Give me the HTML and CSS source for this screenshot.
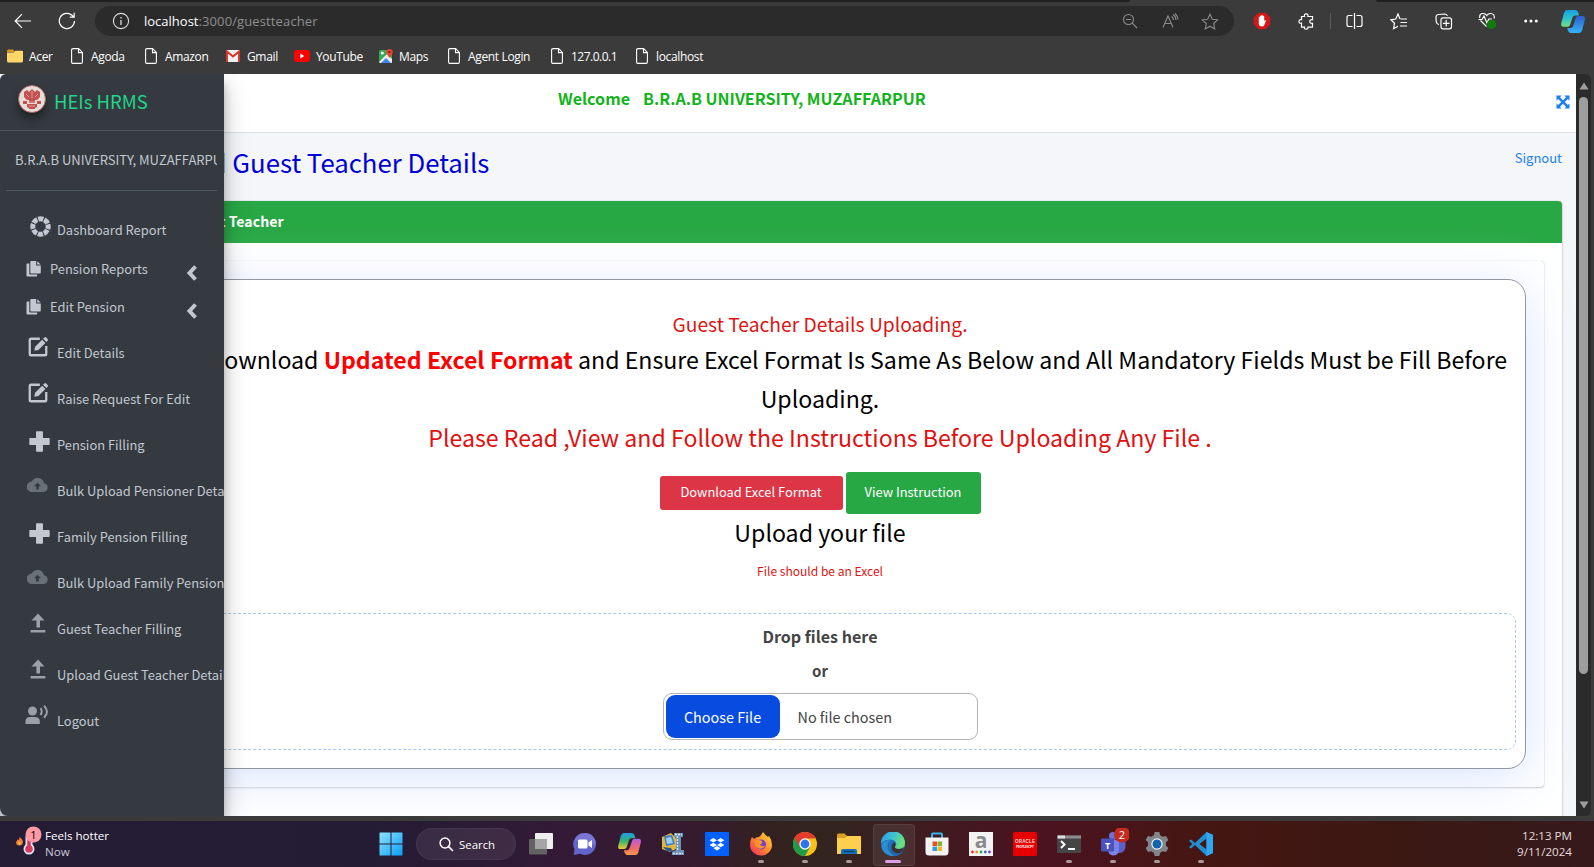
FILE: index.html
```html
<!DOCTYPE html>
<html lang="en">
<head>
<meta charset="utf-8">
<title>HEIs HRMS</title>
<link rel="stylesheet" href="styles.css">
</head>
<body>
<svg class="defs" aria-hidden="true">
  <defs>
    <symbol id="page" viewBox="0 0 12 16"><path d="M.6 2Q.6.6 2 .6h5.600L11.400 4.400V14q0 1.400-1.400 1.400H2Q.6 15.400.6 14z M7.500.8v3.800h3.800" fill="none" stroke="#fff" stroke-width="1.100"/></symbol>
    <symbol id="copy" viewBox="0 0 16 16"><path fill="#c2c7d0" d="M5.200 0h5v4.400h4.600v7.200q0 .9-.9.900H5.200q-.9 0-.9-.9V.9q0-.9.9-.9zM11.200.2l3.500 3.300h-3.500zM3.300 2.500v10.100q0 1 1 1h6.900v1q0 .9-.9.900H1.400q-.9 0-.9-.9V3.400q0-.9.900-.9z"/></symbol>
    <symbol id="edit" viewBox="0 0 24 24"><path d="M14 3H4.500Q3 3 3 4.500v15Q3 21 4.500 21h15q1.500 0 1.500-1.500V11" fill="none" stroke="#c2c7d0" stroke-width="2.500"/><path fill="#c2c7d0" d="M8 16l.8-4.400L16.500 4l3.600 3.500-7.700 7.700zM17.500 3l1.400-1.400q1-1 2 0l1.600 1.600q1 1 0 2L21.100 6.500z"/></symbol>
    <symbol id="plus" viewBox="0 0 20 20"><path fill="#c2c7d0" d="M7.300.3h5.400q.6 0 .6.700v5.700H19q.7 0 .7.600v5.400q0 .6-.7.600h-5.700V19q0 .7-.6.700H7.300q-.6 0-.6-.7v-5.700H1q-.7 0-.7-.6V7.300q0-.6.700-.6h5.700V1q0-.7.600-.7z"/></symbol>
    <symbol id="cloud" viewBox="0 0 24 18"><path fill="#6a7078" fill-rule="evenodd" d="M19.400 7.100A7.500 7.500 0 0 0 5.400 5 6 6 0 0 0 6 17h13a5 5 0 0 0 .4-9.900zM13.500 10.500V14h-3v-3.500H8L12 6.500l4 4z"/></symbol>
    <symbol id="up" viewBox="0 0 16 20"><path fill="#9a9fa8" d="M8 .5l6.500 7H10v7H6.400v-7H1.500zM.6 17h14.800v2.400H.6z"/></symbol>
    <symbol id="chev" viewBox="0 0 12 18"><path d="M9.500 2.500L3.500 9l6 6.500" fill="none" stroke="#c2c7d0" stroke-width="4"/></symbol>
  </defs>
</svg>

<header class="chrome">
  <div class="tabstrip"><i class="tab-a"></i><i class="tab-b"></i></div>
  <div class="toolbar">
    <svg class="back" width="18" height="16" viewBox="0 0 18 16"><path d="M17 8H1.500M8 1.200L1.200 8 8 14.800" fill="none" stroke="#fff" stroke-width="1.200"/></svg>
    <svg class="reload" width="18" height="18" viewBox="0 0 18 18"><path d="M16.500 9A7.600 7.600 0 1 1 14 3.300L16 5M16.200.8V5.200H11.800" fill="none" stroke="#fff" stroke-width="1.200"/></svg>
    <div class="url">
      <svg width="18" height="18" viewBox="0 0 18 18"><circle cx="9" cy="9" r="7.600" fill="none" stroke="#ddd" stroke-width="1.100"/><path d="M9 8v5M9 5v1.400" stroke="#ddd" stroke-width="1.300"/></svg>
      <span class="addr"><b>localhost</b><span class="path">:3000/guestteacher</span></span>
      <svg class="u1" width="16" height="16" viewBox="0 0 16 16"><path d="M11.500 6.500a5 5 0 1 1-10 0 5 5 0 0 1 10 0zM10.300 10.200L15 15M4 6.500h5" fill="none" stroke="#8c8c8c" stroke-width="1.100"/></svg>
      <svg class="u2" width="17" height="16" viewBox="0 0 17 16"><path d="M1 14.500L6 3l5 11.500M2.700 10.500h6.600M9.500 3.500q2 1.500 2 3.500M11 1.500q3 2 3 5.500M13 .5q3 3 3 6" fill="none" stroke="#8c8c8c" stroke-width="1.100"/></svg>
      <svg class="u3" width="18" height="17" viewBox="0 0 18 17"><path d="M9 1.200l2.300 5 5.300.6-3.900 3.700 1 5.400L9 13.200l-4.700 2.700 1-5.400L1.400 6.800l5.300-.6z" fill="none" stroke="#8c8c8c" stroke-width="1.100"/></svg>
    </div>
    <div class="tools">
      <svg class="t1" width="18" height="18" viewBox="0 0 18 18"><path d="M5.500.8h7l4.700 4.700v7l-4.700 4.700h-7L.8 12.500v-7z" fill="#d41717"/><path d="M5.800 9V5q.7-.7 1.200 0v-1q.8-.8 1.400 0v-.7q.8-.7 1.400 0V4q.8-.6 1.400.2V9l1-1q1 0 .6 1l-1.600 4.200Q10.600 14.500 9 14.500q-3.200 0-3.200-3z" fill="#fff"/></svg>
      <svg class="t2" width="17" height="17" viewBox="0 0 17 17"><path d="M3.500 3.500h3q-.6-2.700 1.700-2.700T9.900 3.500h4.600v3.200q-2.700-.4-2.700 1.800t2.700 1.800v3.900H10q.5 2-1.800 2t-1.700-2h-3v-4q-2.500.4-2.500-1.800t2.500-1.700z" fill="none" stroke="#fff" stroke-width="1.200"/></svg>
      <i class="sep"></i>
      <svg class="t3" width="17" height="16" viewBox="0 0 17 16"><path d="M6.500 2.500H3Q1 2.500 1 4.500v7q0 2 2 2h3.500M10.500 2.500H14q2 0 2 2v7q0 2-2 2h-3.500M8.500 0v16" fill="none" stroke="#fff" stroke-width="1.200"/></svg>
      <svg class="t4" width="18" height="17" viewBox="0 0 18 17"><path d="M10 6L8 1 5.800 6 .9 6.800 4.500 10.300 3.600 15.700 8 13.200M10.500 6H17M10.500 9.500H17M10 13h7" fill="none" stroke="#fff" stroke-width="1.200"/></svg>
      <svg class="t5" width="18" height="17" viewBox="0 0 18 17"><path d="M4 11.500Q1.500 11 1.200 8.500L1 4Q1 2 3 1.500L10 1q2 0 2.300 2M8 4.800h6.500q2 0 2 2v7q0 2-2 2H8q-2 0-2-2v-7q0-2 2-2zM11.200 7v6.500M8 10.300h6.500" fill="none" stroke="#fff" stroke-width="1.200"/></svg>
      <svg class="t6" width="20" height="18" viewBox="0 0 20 18"><path d="M8.500 14.500L2.500 8.500M1.700 6Q1.200 1.500 5 1.500 7.500 1.500 8.800 3.500 10 1.500 12.700 1.500q4 0 3.600 5M.5 7.500H4L6 4l3 7 1.800-4H14" fill="none" stroke="#fff" stroke-width="1.200"/><circle cx="13.500" cy="12.500" r="4.700" fill="#107c10"/></svg>
      <svg class="t7" width="14" height="4" viewBox="0 0 14 4"><circle cx="1.700" cy="2" r="1.500" fill="#fff"/><circle cx="7" cy="2" r="1.500" fill="#fff"/><circle cx="12.300" cy="2" r="1.500" fill="#fff"/></svg>
      <svg class="t8" width="26" height="25" viewBox="0 0 26 25"><defs><linearGradient id="ca" x2="0" y2="1"><stop stop-color="#14a0e0"/><stop offset=".5" stop-color="#2bc4cf"/><stop offset="1" stop-color="#7be07d"/></linearGradient><linearGradient id="cb" x2="0" y2="1"><stop stop-color="#2f5fd0"/><stop offset="1" stop-color="#33b5f7"/></linearGradient></defs><path d="M7 1h8.500q2 0 3 3l.5 2.500h-4q-2 0-2.700 2.500L10 16q-.5 1.800-2.500 1.800H3.500Q.5 17.800 1.300 14L4 4q1-3 3-3z" fill="url(#ca)"/><path d="M18.500 7h4q3 0 2.400 3.500L22.500 20q-1 4-3.500 4h-8q-3 0-3.800-5h3.300q2 0 2.800-2.500L15.700 9q.6-2 2.800-2z" fill="url(#cb)"/></svg>
    </div>
  </div>
  <nav class="bookmarks">
    <a class="b0"><svg width="16" height="14" viewBox="0 0 16 14"><path d="M0 2Q0 .5 1.500.5H6L8 3H0z" fill="#d99b1b"/><path d="M0 3.500h6.500L8.500 1.700H15q1 0 1 1V12q0 1.500-1.500 1.500h-13Q0 13.500 0 12z" fill="#ffd869"/></svg><span>Acer</span></a>
    <a class="b1"><svg width="12" height="16"><use href="#page"/></svg><span>Agoda</span></a>
    <a class="b2"><svg width="12" height="16"><use href="#page"/></svg><span>Amazon</span></a>
    <a class="b3"><svg width="14" height="12" viewBox="0 0 14 12"><path d="M0 1q0-1 1-1h12q1 0 1 1v10q0 1-1 1H1q-1 0-1-1z" fill="#f2f2f2"/><path d="M1 12V1.500L7 6.500l6-5V12" fill="none" stroke="#d93025" stroke-width="1.900"/></svg><span>Gmail</span></a>
    <a class="b4"><svg width="16" height="12" viewBox="0 0 16 12"><rect width="16" height="12" rx="3" fill="#f00"/><path d="M6.300 3.500v5l4-2.500z" fill="#fff"/></svg><span>YouTube</span></a>
    <a class="b5"><svg width="14" height="14" viewBox="0 0 14 14"><rect y="1" width="13" height="13" rx="1.500" fill="#34a853"/><path d="M0 13L8 5l5 5v3.500L12.500 14H1z" fill="#eee"/><path d="M2 14l5-5 5 5z" fill="#4285f4"/><path d="M10.500 0q3.300 0 3.300 3 0 1.500-3.300 6Q7.300 4.500 7.300 3q0-3 3.200-3z" fill="#ea4335"/><circle cx="10.500" cy="3" r="1.100" fill="#7c1710"/><circle cx="3.300" cy="4" r="1.500" fill="#fff"/></svg><span>Maps</span></a>
    <a class="b6"><svg width="12" height="16"><use href="#page"/></svg><span>Agent Login</span></a>
    <a class="b7"><svg width="12" height="16"><use href="#page"/></svg><span class="ip">127.0.0.1</span></a>
    <a class="b8"><svg width="12" height="16"><use href="#page"/></svg><span>localhost</span></a>
  </nav>
</header>

<div class="view">
  <aside class="sidebar">
    <div class="brand">
      <svg class="seal" width="28" height="28" viewBox="0 0 28 28"><circle cx="14" cy="14" r="13.500" fill="#e6dcdb" stroke="#b5645f"/><path d="M6 7l3-2 2 2 3-3 3 3 2-2 3 2v5l-3 3H9l-3-3zM11 14h6v4h-6zM5 16h4v3H5zM19 16h4v3h-4zM9 19h10v3l-2 1v1h-6v-1l-2-1z" fill="#c4514d"/><path d="M8 9l3 3M14 6v7M20 9l-3 3M10 17h8M11 21h6" stroke="#e8c9c6" stroke-width=".7"/></svg>
      <span>HEIs HRMS</span>
    </div>
    <div class="univ"><span>B.R.A.B UNIVERSITY, MUZAFFARPUR</span></div>
    <ul class="menu">
      <li class="first"><svg class="m-ring" width="21" height="21" viewBox="0 0 21 21"><circle cx="10.500" cy="10.500" r="7.700" fill="none" stroke="#c2c7d0" stroke-width="5" stroke-dasharray="5.050 1" stroke-dashoffset="2.500"/></svg><span>Dashboard Report</span></li>
      <li class="tree"><svg width="16" height="16"><use href="#copy"/></svg><span>Pension Reports</span><svg class="arrow" width="12" height="18"><use href="#chev"/></svg></li>
      <li class="tree last"><svg width="16" height="16"><use href="#copy"/></svg><span>Edit Pension</span><svg class="arrow" width="12" height="18"><use href="#chev"/></svg></li>
      <li><svg class="m-edit" width="22" height="22"><use href="#edit"/></svg><span>Edit Details</span></li>
      <li><svg class="m-edit" width="22" height="22"><use href="#edit"/></svg><span>Raise Request For Edit</span></li>
      <li><svg class="m-plus" width="21" height="21"><use href="#plus"/></svg><span>Pension Filling</span></li>
      <li><svg class="m-cloud" width="21" height="16"><use href="#cloud"/></svg><span>Bulk Upload Pensioner Details</span></li>
      <li><svg class="m-plus" width="21" height="21"><use href="#plus"/></svg><span>Family Pension Filling</span></li>
      <li><svg class="m-cloud" width="21" height="16"><use href="#cloud"/></svg><span>Bulk Upload Family Pension</span></li>
      <li><svg class="m-up" width="16" height="20"><use href="#up"/></svg><span>Guest Teacher Filling</span></li>
      <li><svg class="m-up" width="16" height="20"><use href="#up"/></svg><span>Upload Guest Teacher Details</span></li>
      <li><svg class="m-voice" width="24" height="20" viewBox="0 0 24 20"><circle cx="7.500" cy="6" r="4.500" fill="#9a9fa8"/><path d="M.5 19v-2.500Q.5 12 5 12h5q4.800 0 4.800 4.500V19z" fill="#9a9fa8"/><path d="M15.500 3q2.500 3.300 0 7M19 .8q6 6 0 12" fill="none" stroke="#9a9fa8" stroke-width="2"/></svg><span>Logout</span></li>
    </ul>
  </aside>

  <main class="main">
    <div class="navbar">
      <strong class="welcome"><span>Welcome</span><span>B.R.A.B UNIVERSITY, MUZAFFARPUR</span></strong>
      <svg width="14" height="14" viewBox="0 0 14 14"><path fill="#1a7ff5" d="M.5.500h5L4 2.200l3 3 3-3L8.500.500h5v5L11.800 4l-3 3 3 3 1.700-1.500v5h-5L10 11.800l-3-3-3 3 1.500 1.700h-5v-5L2.200 10l3-3-3-3L.5 5.500z"/></svg>
    </div>
    <div class="titlebar">
      <h1>Upload Guest Teacher Details</h1>
      <a>Signout</a>
    </div>
    <section class="card">
      <div class="card-head">Upload Guest Teacher</div>
      <div class="card-body">
        <div class="inner">
          <form class="upload">
            <p class="lead">Guest Teacher Details Uploading.</p>
            <p class="big">Please Download <b>Updated Excel Format</b> and Ensure Excel Format Is Same As Below and All Mandatory Fields Must be Fill Before Uploading.</p>
            <p class="big red">Please Read ,View and Follow the Instructions Before Uploading Any File .</p>
            <div class="buttons">
              <span class="btn danger">Download Excel Format</span>
              <span class="btn success">View Instruction</span>
            </div>
            <p class="big file">Upload your file</p>
            <p class="note">File should be an Excel</p>
            <div class="drop">
              <b class="drop-title">Drop files here</b>
              <b class="drop-or">or</b>
              <div class="picker"><span class="pick">Choose File</span><span class="none">No file chosen</span></div>
            </div>
          </form>
        </div>
      </div>
    </section>
  </main>
  <div class="scroll">
    <svg width="10" height="8" viewBox="0 0 10 8"><path d="M5 .5l4.600 7H.4z" fill="#9e9e9e"/></svg>
    <i class="thumb"></i>
    <svg class="dn" width="10" height="8" viewBox="0 0 10 8"><path d="M5 7.500L9.600.5H.4z" fill="#9e9e9e"/></svg>
  </div>
</div>

<footer class="taskbar">
  <div class="weather">
    <svg width="28" height="30" viewBox="0 0 28 30"><path d="M3.500 11q3 2 3.500 4.500 0 4-3.500 4T0 16q1-1 1.500-2.500L3 14z" fill="#f47b3a"/><path d="M2 17l1.500-2L5 17.500 3.500 19z" fill="#ffc845"/><circle cx="13" cy="23" r="5.500" fill="#dfe8fb"/><rect x="9.500" y="8" width="7" height="16" rx="3" fill="#dfe8fb"/><circle cx="13" cy="23" r="3.800" fill="#d83b5c"/><rect x="11.200" y="12" width="3.600" height="11" fill="#d83b5c"/><circle cx="17.500" cy="8.500" r="8" fill="#ff99a4"/><text x="17.500" y="12.500" class="badge-one">1</text></svg>
    <div><span>Feels hotter</span><span class="now">Now</span></div>
  </div>
  <div class="apps">
    <i class="app"><svg width="24" height="24" viewBox="0 0 24 24"><defs><linearGradient id="w" x2="1" y2="1"><stop stop-color="#8fe3ff"/><stop offset="1" stop-color="#0a9df5"/></linearGradient></defs><path fill="url(#w)" d="M1 .5h10.500V11.500H.5V1zM12.500.5H23q.5 0 .5.500v10.500h-11zM.5 12.500h11v11H1q-.5 0-.5-.5zM12.500 12.500h11V23q0 .5-.5.500H12.500z"/></svg></i>
    <div class="search"><svg width="15" height="15" viewBox="0 0 15 15"><circle cx="6" cy="6" r="4.900" fill="none" stroke="#fff" stroke-width="1.500"/><path d="M9.600 9.600L14 14" stroke="#fff" stroke-width="1.700"/></svg><span>Search</span></div>
    <i class="app"><svg width="24" height="24" viewBox="0 0 24 24"><rect x="6" y="1" width="18" height="16" rx="1" fill="#eee"/><rect y="7" width="18" height="15.500" rx="1" fill="#636363"/><path d="M6 7h12v10H6z" fill="#a5a5a5"/></svg></i>
    <i class="app"><svg width="24" height="24" viewBox="0 0 24 24"><path d="M12 1a11 11 0 1 1-5 20.800L.8 23l.7-6A11 11 0 0 1 12 1z" fill="#6264c9"/><path d="M12 1a11 11 0 0 1 11 11L12 14 2 8q3-7 10-7z" fill="#8b80d8" opacity=".6"/><rect x="5" y="7.500" width="9.500" height="9" rx="1.500" fill="#fff"/><path d="M15.500 10.500L19 8v8l-3.500-2.500z" fill="#fff"/></svg></i>
    <i class="app"><svg width="25" height="24" viewBox="0 0 26 25"><defs><linearGradient id="p" x2="0" y2="1"><stop stop-color="#1e9be8"/><stop offset=".5" stop-color="#35b36b"/><stop offset="1" stop-color="#f3c934"/></linearGradient><linearGradient id="q" x2="0" y2="1"><stop stop-color="#b35be0"/><stop offset=".6" stop-color="#f06a6a"/><stop offset="1" stop-color="#fb9a4b"/></linearGradient></defs><path d="M7 1h8.500q2 0 3 3l.5 2.500h-4q-2 0-2.700 2.500L10 16q-.5 1.800-2.500 1.800H3.500Q.5 17.800 1.300 14L4 4q1-3 3-3z" fill="url(#p)"/><path d="M18.500 7h4q3 0 2.400 3.500L22.500 20q-1 4-3.500 4h-8q-3 0-3.800-5h3.300q2 0 2.800-2.500L15.700 9q.6-2 2.800-2z" fill="url(#q)"/></svg></i>
    <i class="app"><svg width="24" height="24" viewBox="0 0 24 24"><path d="M1 5l9-4 5 5v11l-6 3-8-3z" fill="#e0b83a"/><path d="M3 4l8-1 3 9-9 2z" fill="#3c7bd0"/><path d="M5 6l5-1 2 6-6 1z" fill="#9fd0f5"/><path d="M13 1h9v4h-2v13h3v5H11v-3l4-2V5h-2z" fill="#6b93b8"/><path d="M16.500 4v15M12 21.500h10M14 2.500h7" stroke="#dbe9f5" stroke-width="1.300" stroke-dasharray="2 1"/><path d="M2 15l8 1 2 4-6-1z" fill="#28588e"/></svg></i>
    <i class="app"><svg width="24" height="24" viewBox="0 0 24 24"><path fill="#0061fe" d="M0 0h24v24H0z"/><path fill="#fff" d="M8.300 6L12 8.300 8.300 10.600 4.600 8.300zM15.700 6l3.700 2.300-3.700 2.300L12 8.300zM8.300 10.700L12 13l-3.700 2.300L4.600 13zM15.700 10.700l3.700 2.300-3.700 2.300L12 13zM12 14l3.600 2.200L12 18.500l-3.600-2.300z"/></svg></i>
    <i class="app run"><svg width="24" height="24" viewBox="0 0 24 24"><defs><linearGradient id="f" x1="1" x2="0" y2="1"><stop stop-color="#ffe33d"/><stop offset=".5" stop-color="#ff8a2a"/><stop offset="1" stop-color="#f0246b"/></linearGradient></defs><path d="M3 5l2 2q2-2 5-2 2-1 4-5 2 3 5 5l1-1q3 4 3 9a11 10.500 0 0 1-22 0q0-5 2-8z" fill="url(#f)"/><circle cx="12" cy="12.500" r="5" fill="#7541c9"/><path d="M6 9q4-2 7 0 1 3-2 3.500 1 2.500 5 1-2 4-6 3-5-2-4-7.500z" fill="#ff9428"/></svg></i>
    <i class="app run"><svg width="24" height="24" viewBox="0 0 24 24"><circle cx="12" cy="12" r="12" fill="#fbc116"/><path d="M12 12H6.800L1.600 6A12 12 0 0 0 12 24l5.200-9z" fill="#229a4b"/><path d="M12 6.500h10.600A12 12 0 0 0 1.600 6l5.200 9z" fill="#e33b2e"/><circle cx="12" cy="12" r="5.700" fill="#fff"/><circle cx="12" cy="12" r="4.400" fill="#2f74e8"/></svg></i>
    <i class="app run"><svg width="24" height="24" viewBox="0 0 24 24"><path d="M0 3q0-1.500 1.500-1.500h6L10 4H24v8H0z" fill="#dd9f1f"/><path d="M0 6h8l2-2h12.500Q24 4 24 5.500V22H0z" fill="#fecf4e"/><path d="M4 22v-3q0-2 2-2h12q2 0 2 2v3z" fill="#1670b8"/><path d="M7 19.500h10" stroke="#0b3f73" stroke-width="1.300"/></svg></i>
    <i class="app active"><svg width="24" height="24" viewBox="0 0 24 24"><defs><linearGradient id="e" x2="1" y2=".3"><stop stop-color="#1b90d8"/><stop offset=".5" stop-color="#2cb9d8"/><stop offset="1" stop-color="#5ddd6e"/></linearGradient></defs><circle cx="12" cy="12" r="12" fill="#0d66b5"/><path d="M0 11.500A12 12 0 0 1 24 11q0 6-6 6-4.500 0-4-2.500 1.300-1 1.300-3Q14.500 8 9.500 7.500 3.500 7.500 0 11.500z" fill="url(#e)"/><path d="M9.500 8q-6 5-1 12 2 2.500 5 4Q5 24 1.500 18-2 9.500 9.500 8z" fill="#1a86cf"/><path d="M14 14.500q-.5 2.500 4 2.500 3 0 5-2-1 4.500-5 7-6-1-7.500-5Q10 13 13 10q2.500 2 1 4.500z" fill="#2c1f22"/><path d="M10.500 13q-1 7 5 8.200 4 .3 7-2.700-3.500 5.500-9 5.500-7-3-3-11z" fill="#1458a0"/></svg></i>
    <i class="app"><svg width="24" height="24" viewBox="0 0 24 24"><path d="M7 7V2.500Q7 1.500 8 1.500h8q1 0 1 1V7" fill="none" stroke="#3bb4ee" stroke-width="2"/><path d="M.5 5.500h23V20q0 3.500-3.500 3.500H4Q.5 23.500.5 20z" fill="#f4f4f4"/><path d="M7.500 9.500H12V14H7.500z" fill="#e8502a"/><path d="M12.600 9.500H17V14h-4.400z" fill="#7fb62c"/><path d="M7.500 14.600H12V19H7.500z" fill="#2d9fe3"/><path d="M12.600 14.600H17V19h-4.400z" fill="#f5b81c"/></svg></i>
    <i class="app"><svg width="24" height="24" viewBox="0 0 24 24"><path fill="#f3f3f3" d="M0 0h24v24H0z"/><text x="12" y="16" class="glyph-a">a</text><circle cx="3.500" cy="20" r="1.400" fill="#e8392b"/><circle cx="7.700" cy="20" r="1.400" fill="#f08b1d"/><circle cx="12" cy="20" r="1.400" fill="#35a344"/><circle cx="16.300" cy="20" r="1.400" fill="#2d6ae0"/><circle cx="20.500" cy="20" r="1.400" fill="#8b3bd0"/></svg></i>
    <i class="app"><svg width="24" height="24" viewBox="0 0 24 24"><rect width="24" height="24" rx="1.500" fill="#e60000"/><text x="12" y="10.500" class="ora" textLength="20">ORACLE</text><text x="12" y="16" class="ora sm" textLength="18">PEOPLESOFT</text></svg></i>
    <i class="app run"><svg width="24" height="24" viewBox="0 0 24 24"><path fill="#454545" d="M0 3.500h24V20q0 1-1 1H1q-1 0-1-1z"/><path d="M0 3.500h24v3H0z" fill="#8c8c8c"/><path d="M1 3.500h7v3H1z" fill="#ddd"/><path d="M4 9l3.500 3.500L4 16M11 17h7" fill="none" stroke="#fff" stroke-width="2"/></svg></i>
    <i class="app run"><svg width="32" height="32" viewBox="0 0 32 32"><circle cx="16" cy="8" r="4" fill="#6b71d6"/><path d="M16 12h11q1.500 0 1.500 1.500V19a6 6 0 0 1-6 6H16z" fill="#5a60c8"/><path d="M11 12h11v9q0 6-5.500 6.500Q11 27 11 21z" fill="#7b83eb"/><rect x="4" y="10.500" width="13" height="13" rx="1" fill="#4a52bd"/><text x="10.500" y="20.500" class="teams">T</text><circle cx="25" cy="6.500" r="8" fill="#c42b1c"/><text x="25" y="10.800" class="two">2</text></svg></i>
    <i class="app run"><svg width="24" height="24" viewBox="0 0 24 24"><path d="M9.700 0h4.600l.9 3.300 2.600 1.500 3.200-.9 2.400 4-2.400 2.400v3.400l2.400 2.400-2.400 4-3.200-.9-2.600 1.500-.9 3.300H9.700l-.9-3.300-2.600-1.500-3.200.9-2.400-4L3 13.700v-3.400L.6 7.900l2.400-4 3.200.9 2.600-1.500z" fill="#80858a"/><circle cx="12" cy="12" r="5.700" fill="#f2f5f8"/><circle cx="12" cy="12" r="4.500" fill="#1464ad"/></svg></i>
    <i class="app run"><svg width="24" height="24" viewBox="0 0 24 24"><path d="M17.500 0L24 3v18l-6.500 3L6 13l-4 3.500-2-1.300L3.500 12 0 8.800l2-1.300L6 11zM17.500 6.500L10.500 12l7 5.500z" fill="#1f8fd8" fill-rule="evenodd"/><path d="M17.500 0L24 3v18l-6.500 3z" fill="#2ea8f0"/></svg></i>
  </div>
  <div class="clock"><span>12:13 PM</span><span>9/11/2024</span></div>
</footer>
</body>
</html>
```
FILE: styles.css
```css
* { box-sizing: border-box; }
body {
  margin: 0;
  width: 1594px;
  height: 867px;
  overflow: hidden;
  display: flex;
  flex-direction: column;
  background: #3b3b3b;
  font-family: "Noto Sans CJK SC", "Noto Sans", sans-serif;
}
svg { display: block; flex: none; }
p, h1, ul { margin: 0; padding: 0; }
.defs { position: absolute; width: 0; height: 0; }

/* browser frame */
.chrome { height: 74px; color: #fff; font-family: "Open Sans", "Noto Sans", sans-serif; }
.tabstrip { height: 2px; display: flex; justify-content: space-between; }
.tab-a { width: 1130px; background: #202020; border-radius: 0 0 4px 0; }
.tab-b { width: 218px; background: #202020; border-radius: 0 0 0 4px; }
.toolbar { height: 38px; display: flex; align-items: center; padding-left: 14px; }
.reload { margin-left: 26px; }
.url {
  margin-left: 19px; width: 1139px; height: 30px; border-radius: 15px;
  background: #2b2b2b; display: flex; align-items: center; padding: 0 15px 0 17px;
}
.addr { margin-left: 14px; font-size: 13px; color: #8f8f8f; flex: 1; line-height: 20px; }
.addr b { color: #fff; font-weight: 400; }
.path { letter-spacing: .12px; }
.u2 { margin-left: 24px; }
.u3 { margin-left: 22px; }
.tools { display: flex; align-items: center; }
.t1 { margin-left: 19px; }
.t2 { margin-left: 27px; }
.sep { width: 1px; height: 16px; background: #5c5c5c; margin-left: 15px; }
.t3 { margin-left: 15px; }
.t4 { margin-left: 27px; }
.t5 { margin-left: 27px; }
.t6 { margin-left: 25px; }
.t7 { margin-left: 26px; }
.t8 { margin-left: 22px; }
.bookmarks { height: 34px; display: flex; font-size: 12px; }
.bookmarks a { display: flex; align-items: center; height: 32px; white-space: nowrap; }
.bookmarks span { letter-spacing: -.35px; }
.bookmarks .ip { letter-spacing: -.5px; }
.b0 { width: 64px; margin-left: 7px; gap: 6px; }
.b1, .b2, .b6, .b7, .b8 { gap: 8px; }
.b1 { width: 74px; }
.b2 { width: 81px; }
.b3 { width: 68px; gap: 7px; }
.b4 { width: 85px; gap: 6px; }
.b5 { width: 69px; gap: 6px; }
.b6 { width: 103px; }
.b7 { width: 85px; }

/* page viewport */
.view { position: relative; height: 742px; display: flex; overflow: hidden; }
.main { width: 1576px; background: #f4f6f9; }
.sidebar {
  position: absolute; left: 0; top: 0; z-index: 2; width: 224px; height: 742px; overflow: hidden;
  background: #343a40; color: #c2c7d0; border-radius: 6px 0 0 8px;
  box-shadow: 0 12px 25px rgba(0,0,0,.25), 0 9px 9px rgba(0,0,0,.2);
}
.brand { height: 57px; border-bottom: 1px solid #4b545c; display: flex; align-items: center; padding: 0 0 6px 18px; gap: 8px; color: #20d48a; font-size: 18.500px; line-height: 30px; }
.brand span { padding-top: 4px; }
.seal { border-radius: 50%; box-shadow: 0 6px 8px rgba(0,0,0,.4); }
.univ { margin: 0 7px 0 6px; height: 60px; border-bottom: 1px solid #4f5962; padding: 19px 0 0 9px; overflow: hidden; white-space: nowrap; font-size: 13px; line-height: 20px; }
.menu { list-style: none; padding-top: 19px; }
.menu li { height: 46px; display: flex; align-items: center; padding-left: 26px; font-size: 12.900px; line-height: 20px; white-space: nowrap; }
.menu li span { margin-left: auto; width: 167px; flex: none; }
.menu .first { height: 40px; }
.menu .tree { height: 38px; }
.menu .tree span { width: auto; margin: 0 auto 0 8px; }
.menu .arrow { margin: 8px 26px 0 0; }
.menu .last { margin-bottom: 4px; }
.m-ring { margin: 0 0 8px 4px; }
.m-edit { margin: 0 0 12px 1px; }
.m-plus { margin: 0 0 8px 3px; }
.m-cloud { margin: 0 0 12px 1px; }
.m-up { margin: 0 0 13px 4px; }
.m-voice { margin: 0 0 13px -1px; }

.navbar { height: 59px; background: #fff; border-bottom: 1px solid #dee2e6; display: flex; align-items: center; padding: 0 6px 2px 558px; }
.welcome { flex: 1; display: flex; gap: 13px; color: #12b31b; font-size: 16.080px; line-height: 24px; padding-bottom: 8px; }
.titlebar { height: 68px; padding: 0 14px 0 139px; display: flex; justify-content: space-between; }
h1 { font-size: 25.750px; font-weight: 400; line-height: 58px; color: #0000d6; }
.titlebar a { color: #1a7ff0; font-size: 13px; line-height: 50px; }
.card { margin: 0 14px 0 78px; height: 620px; background: #fff; border-radius: 4px; box-shadow: 0 0 1px rgba(0,0,0,.3), 0 1px 3px rgba(0,0,0,.2); }
.card-head { height: 42px; background: #28a745; border-radius: 4px 4px 0 0; color: #fff; font-weight: 700; font-size: 14.150px; line-height: 41px; padding-left: 54px; }
.card-body { padding: 18px 18px; }
.inner { border-radius: 4px; padding: 18px; box-shadow: 0 0 1px rgba(0,0,0,.25), 0 1px 2px rgba(0,0,0,.2); }
.upload { height: 490px; background: #fff; border: 1px solid #9496a0; border-radius: 18px; box-shadow: 0 9px 54px rgb(218,229,255); padding: 27px 9px 0; text-align: center; color: #000; }
.lead { font-size: 19.250px; line-height: 34px; color: #dc1414; }
.big { font-size: 23.150px; line-height: 39px; position: relative; top: -1px; }
.big b { color: #f00; }
.red { color: #e01010; }
.buttons { margin-top: 14px; height: 42px; display: flex; gap: 3px; justify-content: center; align-items: center; color: #fff; font-size: 12.900px; line-height: 20px; }
.btn { border-radius: 3px; display: flex; align-items: center; justify-content: center; padding-bottom: 3px; }
.danger { width: 183px; height: 34px; background: #dc3545; }
.success { width: 135px; height: 42px; background: #28a745; }
.note { font-size: 12.050px; line-height: 36px; color: #dc1414; }
.drop { margin-top: 24px; height: 137px; border: 1px dashed #a9c6ea; border-radius: 9px; display: flex; flex-direction: column; align-items: center; padding-top: 7px; color: #444; }
.drop-title { font-size: 16.080px; line-height: 30px; }
.drop-or { font-size: 15px; line-height: 40px; }
.picker { margin-top: 2px; width: 315px; height: 47px; border: 1px solid #b5b5b5; border-radius: 9px; display: flex; align-items: center; padding-left: 2px; font-size: 14.400px; }
.pick { width: 114px; height: 43px; border-radius: 9px; background: #084cdf; color: #fff; display: flex; align-items: center; justify-content: center; padding-bottom: 1px; }
.none { margin-left: 18px; padding-bottom: 1px; }

.scroll { width: 15px; background: #2b2b2b; border-radius: 0 6px 6px 0; display: flex; flex-direction: column; align-items: center; padding-top: 8px; }
.thumb { width: 9px; height: 577px; margin-top: 7px; border-radius: 5px; background: #9e9e9e; }
.dn { margin-top: 127px; }

/* system taskbar */
.taskbar {
  margin-top: 5px; height: 46px; display: flex; color: #fff; font-family: "Open Sans", "Noto Sans", sans-serif;
  background: linear-gradient(90deg, #241d35 0, #231c34 360px, #331a36 560px, #361a30 680px, #33221f 780px, #34241f 840px, #431820 960px, #4b1320 1050px, #451612 1200px, #3c1813 1400px, #351a1c 100%);
}
.weather { width: 369px; display: flex; padding-left: 16px; gap: 1px; font-size: 11.600px; line-height: 16px; }
.weather div { display: flex; flex-direction: column; align-items: flex-start; padding-top: 7px; }
.weather svg { margin-top: 5px; }
.now { color: #cfc9d6; }
.apps { display: flex; align-items: center; }
.app { position: relative; width: 44px; height: 46px; display: flex; align-items: center; justify-content: center; font-style: normal; }
.run::after, .active::after { content: ""; position: absolute; bottom: 4px; left: 19px; width: 6px; height: 3px; border-radius: 2px; background: #a8989a; }
.active::after { left: 14px; width: 16px; background: #dda0e6; }
.active::before { content: ""; position: absolute; left: 2px; top: 3px; width: 40px; height: 40px; border-radius: 4px; background: rgba(255,255,255,.08); border: 1px solid rgba(255,255,255,.07); }
.search { width: 100px; height: 32px; margin: 0 3px; border-radius: 16px; background: rgba(255,255,255,.08); border: 1px solid rgba(255,255,255,.05); display: flex; align-items: center; padding-left: 22px; gap: 5px; font-size: 11.400px; }
.clock { margin-left: auto; padding: 7px 22px 0 0; font-size: 11.600px; line-height: 16px; display: flex; flex-direction: column; align-items: flex-end; color: #e6dcdc; }
.badge-one, .two { font: 11px "Open Sans", sans-serif; text-anchor: middle; }
.two { fill: #fff; }
.glyph-a { font: 700 21px "Open Sans", sans-serif; text-anchor: middle; fill: #8a8a8a; }
.ora { font: 700 4.500px "Liberation Sans", sans-serif; text-anchor: middle; fill: #ffdcdc; }
.sm { font-size: 3.500px; }
.teams { font: 700 9px "Open Sans", sans-serif; text-anchor: middle; fill: #fff; }
```
